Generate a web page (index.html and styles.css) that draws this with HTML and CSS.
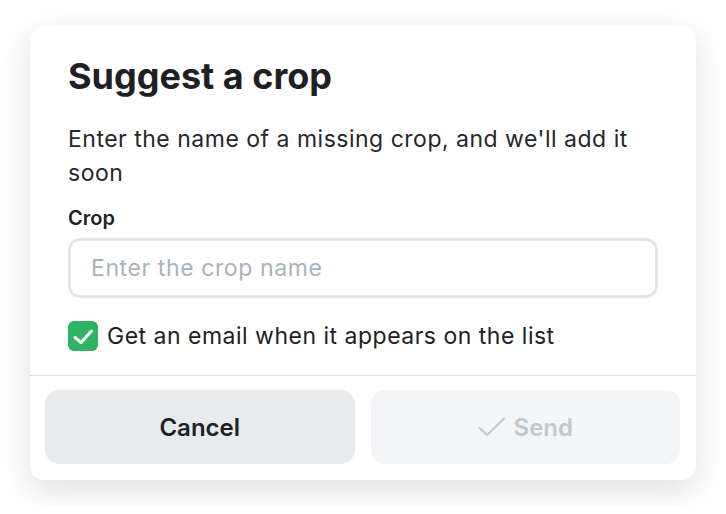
FILE: index.html
```html
<!DOCTYPE html>
<html lang="en">
<head>
    <meta charset="UTF-8">
    <meta name="viewport" content="width=device-width, initial-scale=1.0">
    <title>Suggest a crop</title>
    <link rel="stylesheet" href="styles.css">
</head>
<body>
    <div class="modal">
        <div class="modal-body">
            <h1>Suggest a crop</h1>
            <p class="lead">Enter the name of a missing crop, and we'll add it soon</p>
            <label class="field-label" for="crop-input">Crop</label>
            <input type="text" id="crop-input" class="field" placeholder="Enter the crop name">
            <label class="check">
                <span class="check-box">
                    <svg viewBox="0 0 30 30" width="30" height="30">
                        <path d="M7 16.5 L13 21.5 L23.5 10" stroke="#fff" stroke-width="3" fill="none" stroke-linecap="round" stroke-linejoin="round"/>
                    </svg>
                </span>
                Get an email when it appears on the list
            </label>
        </div>
        <div class="modal-footer">
            <button class="btn btn-cancel">Cancel</button>
            <button class="btn btn-send" disabled>
                <svg viewBox="0 0 28 20" width="28" height="20">
                    <path d="M1.5 11 L9 18 L26 1.5" stroke="#c3ccd2" stroke-width="2.2" fill="none" stroke-linecap="round" stroke-linejoin="round"/>
                </svg>
                Send
            </button>
        </div>
    </div>
</body>
</html>
```

FILE: styles.css
```css
body {
    margin: 0;
    padding: 26px 30px;
    background: #fff;
    font-family: 'Inter', 'Liberation Sans', sans-serif;
    color: #1f2023;
}

.modal {
    width: 666px;
    background: #fff;
    border-radius: 14px;
    box-shadow: 0 10px 32px rgba(0, 0, 0, 0.13);
}

.modal-body {
    padding: 27px 38px 24px;
    border-bottom: 1px solid #dcdde3;
}

h1 {
    margin: 0;
    font-size: 36px;
    font-weight: 700;
    line-height: 46px;
}

.lead {
    margin: 23px 0 0;
    font-size: 23px;
    letter-spacing: 0.5px;
    line-height: 34px;
    color: #26272a;
}

.field-label {
    display: block;
    margin-top: 16px;
    font-size: 20px;
    font-weight: 600;
    line-height: 24px;
}

.field {
    display: block;
    box-sizing: border-box;
    width: 590px;
    height: 60px;
    margin-top: 8px;
    padding: 0 20px;
    border: 3px solid #e3e6ea;
    border-radius: 12px;
    font-family: inherit;
    font-size: 23px;
    letter-spacing: 0.6px;
    color: #1f2023;
    outline: none;
}

.field::placeholder {
    color: #a7b3bc;
}

.check {
    display: flex;
    align-items: center;
    gap: 9px;
    margin-top: 23px;
    font-size: 23px;
    letter-spacing: 0.5px;
    line-height: 30px;
}

.check-box {
    display: flex;
    width: 30px;
    height: 30px;
    border-radius: 6px;
    background: #2fb364;
}

.modal-footer {
    display: flex;
    gap: 16px;
    padding: 14px 16px 16px 15px;
}

.btn {
    flex: 1;
    height: 74px;
    border: none;
    border-radius: 14px;
    font-family: inherit;
    font-size: 24px;
    font-weight: 600;
    display: flex;
    align-items: center;
    justify-content: center;
    gap: 8px;
}

.btn-cancel {
    background: #e8ebee;
    color: #1f2023;
}

.btn-send {
    background: #f4f5f7;
    color: #c0c9cf;
}
```
